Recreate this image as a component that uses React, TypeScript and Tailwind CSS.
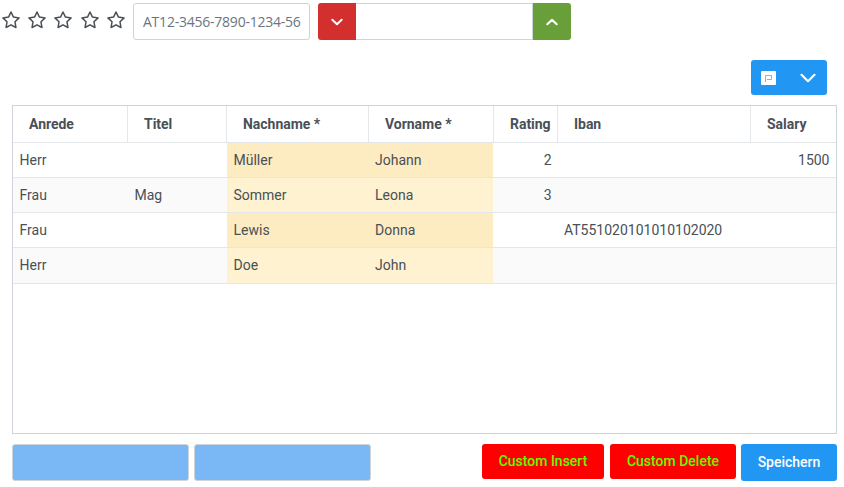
const columns = ['Anrede', 'Titel', 'Nachname *', 'Vorname *', 'Rating', 'Iban', 'Salary'];

const rows = [
  ['Herr', '', 'Müller', 'Johann', '2', '', '1500'],
  ['Frau', 'Mag', 'Sommer', 'Leona', '3', '', ''],
  ['Frau', '', 'Lewis', 'Donna', '', 'AT551020101010102020', ''],
  ['Herr', '', 'Doe', 'John', '', '', ''],
];

const grid = 'grid grid-cols-[115px_99px_142px_125px_64px_193px_85px]';

function Star() {
  return (
    <svg width="18" height="18" viewBox="0 0 18 18" fill="none" stroke="#495057" strokeWidth="1.5" strokeLinejoin="round">
      <path d="M9 1 L11.45 6.1 L17.1 6.9 L13 10.8 L13.95 16.5 L9 13.8 L4.05 16.5 L5 10.8 L0.9 6.9 L6.55 6.1 Z" />
    </svg>
  );
}

function Chevron({ up = false, wide = false }: { up?: boolean; wide?: boolean }) {
  return (
    <svg
      width={wide ? 16 : 12}
      height={wide ? 10 : 8}
      viewBox={wide ? '0 0 16 10' : '0 0 12 8'}
      fill="none"
      stroke="#ffffff"
      strokeWidth={wide ? 2.2 : 2}
      strokeLinecap="round"
      strokeLinejoin="round"
    >
      <path d={wide ? 'M1.5 1.8 L8 8.2 L14.5 1.8' : up ? 'M1.3 6.2 L6 1.7 L10.7 6.2' : 'M1.3 1.8 L6 6.3 L10.7 1.8'} />
    </svg>
  );
}

function cellClass(row: number, col: number) {
  const required = col === 2 || col === 3;
  const numeric = col === 4 || col === 6;
  return [
    'flex items-center pr-[6.5px]',
    col === 3 || col === 5 ? 'pl-[6px]' : 'pl-[6.5px]',
    row === 3 ? 'pb-px' : '',
    numeric ? 'justify-end' : '',
    required ? (row % 2 ? 'bg-[#fef2d0]' : 'bg-[#fdebc2]') : '',
    col === 3 ? 'mr-px' : '',
  ].join(' ');
}

export default function App() {
  return (
    <div className="h-[487px] w-[844px] overflow-hidden bg-white font-['Roboto',sans-serif] text-sm text-[#495057]">
      <div className="flex h-[43px] items-center pl-[2px] pt-[3px] pb-[3px]">
        <div className="flex w-[131px] gap-[8.2px] pb-[3px]">
          {[0, 1, 2, 3, 4].map((i) => (
            <Star key={i} />
          ))}
        </div>
        <div className="flex h-[37px] w-[177px] items-center overflow-hidden rounded-[3px] border border-[#ced4da] pl-[9px] font-['Open_Sans',sans-serif] tracking-[-0.23px] whitespace-nowrap text-[#6c757d]">
          AT12-3456-7890-1234-56
        </div>
        <div className="ml-2 flex h-[37px] w-[253px]">
          <button className="flex w-[38px] items-center justify-center rounded-l-[3px] bg-[#d32f2f]">
            <Chevron />
          </button>
          <div className="w-[177px] border-y border-r border-[#ced4da]" />
          <button className="flex w-[38px] items-center justify-center rounded-r-[3px] bg-[#689f38]">
            <Chevron up />
          </button>
        </div>
      </div>

      <div className="flex justify-end pt-[17px] pr-[17px]">
        <button className="flex h-[35px] w-[76px] items-center rounded-[3px] bg-[#2196f3] pl-[10px]">
          <svg width="15" height="14" viewBox="0 0 15 14">
            <rect width="15" height="14" rx="1" fill="#fff" />
            <path d="M4.5 11 V4.5 H10.5 V8.5 H6" fill="none" stroke="#75b8f7" />
          </svg>
          <span className="ml-[24px] flex">
            <Chevron wide />
          </span>
        </button>
      </div>

      <div className="mt-[10px] ml-3 h-[329px] w-[825px] border border-[#ced4da]">
        <div className={`${grid} h-[37px] border-b border-[#e4e7ea] font-bold tracking-[-0.03px]`}>
          {columns.map((label, i) => (
            <div key={label} className={`flex items-center pl-4 ${i < 6 ? 'border-r border-[#e4e7ea]' : ''}`}>
              {label}
            </div>
          ))}
        </div>
        {rows.map((row, r) => (
          <div
            key={r}
            className={`${grid} border-b border-[#e4e7ea] ${r === 3 ? 'h-[36px]' : 'h-[35px]'} ${r % 2 ? 'bg-[#fafafa]' : 'bg-white'}`}
          >
            {row.map((cell, c) => (
              <div key={c} className={cellClass(r, c)}>
                {cell}
              </div>
            ))}
          </div>
        ))}
      </div>

      <div className="mt-[10px] ml-3 flex w-[825px] items-start font-medium">
        <div className="h-[37px] w-[177px] rounded-[3px] border border-[#ced4da] bg-[#7ab7f5]" />
        <div className="ml-[5px] h-[37px] w-[177px] rounded-[3px] border border-[#ced4da] bg-[#7ab7f5]" />
        <button className="ml-auto h-[35px] w-[122px] rounded-[3px] bg-[#ff0000] pb-px text-[#55ff00]">Custom Insert</button>
        <button className="ml-[6px] h-[35px] w-[126px] rounded-[3px] bg-[#ff0000] pb-px text-[#55ff00]">Custom Delete</button>
        <button className="ml-[5px] h-[37px] w-[96px] rounded-[3px] bg-[#2196f3] pb-px text-white">Speichern</button>
      </div>
    </div>
  );
}
